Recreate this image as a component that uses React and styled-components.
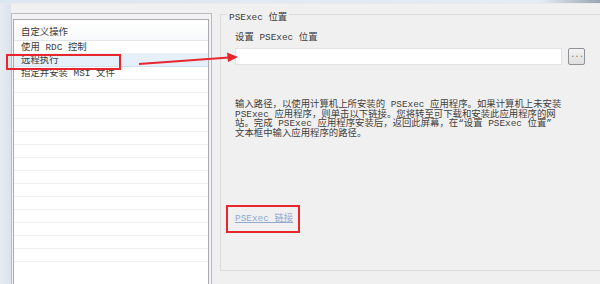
import React from 'react';
import styled, { createGlobalStyle } from 'styled-components';

const GlobalStyle = createGlobalStyle`
  html, body {
    margin: 0;
    padding: 0;
    background: #f0f0f0;
  }
`;

const Screen = styled.div`
  position: relative;
  width: 600px;
  height: 284px;
  overflow: hidden;
  background: #f0f0f0;
  font-family: "Liberation Mono", "Noto Sans CJK SC", monospace;
  font-size: 9.4px;
  color: #3c3c3c;
`;

const TopStrip = styled.div`
  height: 3px;
  background: linear-gradient(to right, #dce7f3, #e4ecf5 90%, #9aa6b4);
  border-bottom: 1px solid #e8eaee;
`;

const Body = styled.div`
  display: flex;
  height: 280px;
`;

const SideStrip = styled.div`
  width: 11px;
  flex: none;
  background: linear-gradient(to right, #e6ecf2, #dbe3eb);
`;

const LeftPanel = styled.div`
  width: 196px;
  flex: none;
  margin-top: 9px;
  padding: 5px 2px 0 1px;
  border: 1px solid #b9bcc0;
  border-bottom: none;
  background: #f2f2f2;
`;

const List = styled.div`
  height: 100%;
  background: #fff;
  border: 1px solid #a9acb0;
  border-bottom: none;
`;

const ListHeader = styled.div`
  height: 21px;
  padding: 4px 0 0 7px;
  box-sizing: border-box;
  border-bottom: 1px solid #e2e4e7;
  background: linear-gradient(#ffffff, #f7f8f9);
`;

const Row = styled.div`
  height: 13px;
  line-height: 14px;
  padding-left: 7px;
  box-sizing: border-box;
  white-space: nowrap;
  border-bottom: 1px solid ${(p) => (p.$selected ? '#cfe2f6' : '#f0f0f0')};
  background: ${(p) => (p.$selected ? '#e6f0fb' : '#fff')};
`;

const GroupBox = styled.div`
  position: relative;
  flex: 1;
  margin: 10px 0 13px 8px;
  padding: 17px 0 0 14px;
  border: 1px solid #dcdcdc;
  border-right: none;
`;

const GroupTitle = styled.div`
  position: absolute;
  top: -6px;
  left: 6px;
  padding: 0 2px;
  background: #f0f0f0;
`;

const FieldLabel = styled.div`
  height: 12px;
  line-height: 12px;
  margin-bottom: 4px;
`;

const FieldRow = styled.div`
  display: flex;
  align-items: center;
  gap: 6px;
`;

const PathInput = styled.div`
  width: 325px;
  height: 15px;
  background: #fff;
  border: 1px solid #e1e3e5;
`;

const BrowseButton = styled.div`
  width: 15px;
  height: 15px;
  border: 1px solid #8e9196;
  border-radius: 2px;
  background: linear-gradient(#f4f4f4, #dedede);
  color: #777;
  font-size: 9px;
  line-height: 12px;
  text-align: center;
  letter-spacing: -1px;
`;

const Help = styled.div`
  margin-top: 35px;
  line-height: 9.6px;
  white-space: nowrap;
  color: #404040;
`;

const HelpLink = styled.div`
  margin-top: 72px;
  color: #8fa9cf;
  text-decoration: underline;
`;

const Annotation = styled.div`
  position: absolute;
  border: 2px solid #e8262d;
  box-sizing: border-box;
  pointer-events: none;
`;

const Arrow = styled.svg`
  position: absolute;
  left: 0;
  top: 0;
  pointer-events: none;
`;

const rows = ['使用 RDC 控制', '远程执行', '指定并安装 MSI 文件', '', '', '', '', '', '', '', '', '', '', '', '', '', ''];

export default function App() {
  return (
    <>
      <GlobalStyle />
      <Screen>
        <TopStrip />
        <Body>
          <SideStrip />
          <LeftPanel>
            <List>
              <ListHeader>自定义操作</ListHeader>
              {rows.map((r, i) => (
                <Row key={i} $selected={i === 1}>{r}</Row>
              ))}
            </List>
          </LeftPanel>
          <GroupBox>
            <GroupTitle>PSExec 位置</GroupTitle>
            <FieldLabel>设置 PSExec 位置</FieldLabel>
            <FieldRow>
              <PathInput />
              <BrowseButton>...</BrowseButton>
            </FieldRow>
            <Help>
              输入路径，以使用计算机上所安装的 PSExec 应用程序。如果计算机上未安装<br />
              PSExec 应用程序，则单击以下链接。您将转至可下载和安装此应用程序的网<br />
              站。完成 PSExec 应用程序安装后，返回此屏幕，在“设置 PSExec 位置”<br />
              文本框中输入应用程序的路径。
            </Help>
            <HelpLink>PSExec 链接</HelpLink>
          </GroupBox>
        </Body>
        <Annotation style={{ left: 6, top: 54, width: 115, height: 16 }} />
        <Annotation style={{ left: 226, top: 205, width: 74, height: 28 }} />
        <Arrow width="600" height="284">
          <line x1="139" y1="64" x2="229" y2="57.5" stroke="#e8262d" strokeWidth="1.8" />
          <polygon points="238,57 227,52.5 228,62" fill="#e8262d" />
        </Arrow>
      </Screen>
    </>
  );
}
